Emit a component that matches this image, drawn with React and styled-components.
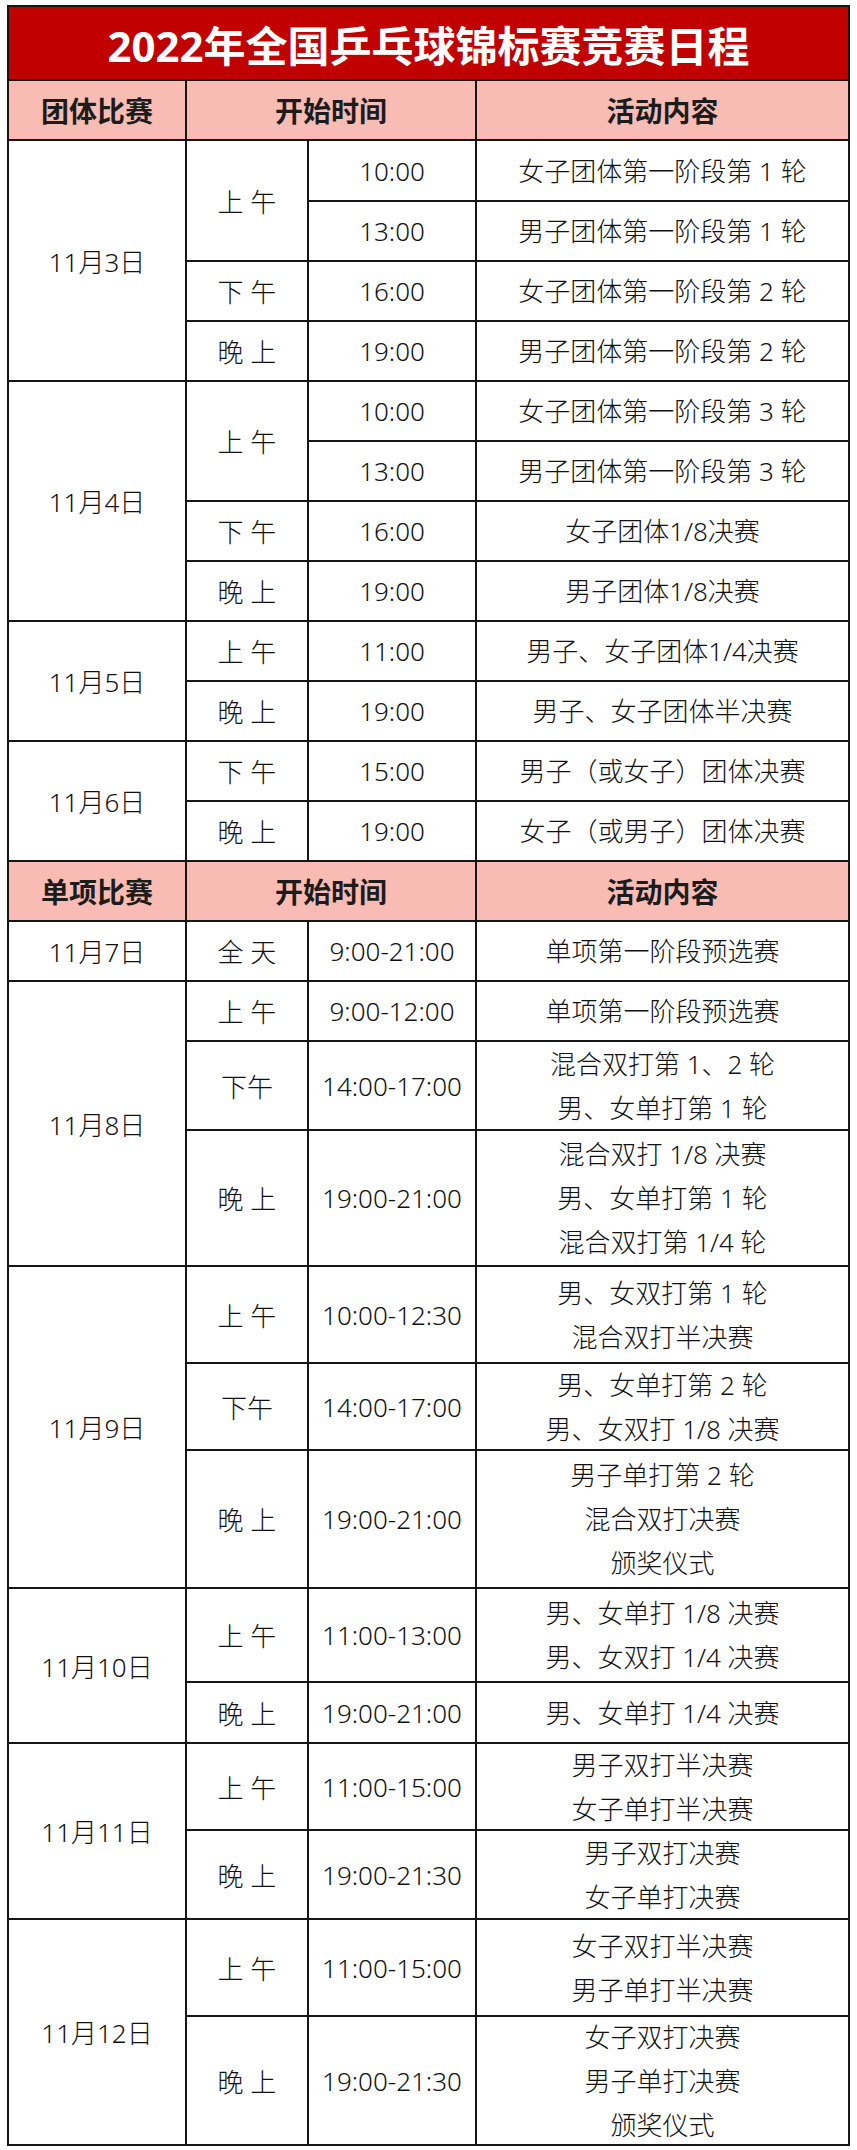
import styled, { createGlobalStyle } from "styled-components";

const GlobalStyle = createGlobalStyle`
  body {
    margin: 0;
    background: #ffffff;
    font-family: "Noto Sans", "Noto Sans CJK SC", sans-serif;
    color: #111111;
  }
`;

const LINE = "#161616";

const teamDays = [
  {
    date: "11月3日",
    periods: [
      {
        name: "上 午",
        slots: [
          { time: "10:00", items: ["女子团体第一阶段第 1 轮"], h: 59 },
          { time: "13:00", items: ["男子团体第一阶段第 1 轮"], h: 58 },
        ],
      },
      { name: "下 午", slots: [{ time: "16:00", items: ["女子团体第一阶段第 2 轮"], h: 58 }] },
      { name: "晚 上", slots: [{ time: "19:00", items: ["男子团体第一阶段第 2 轮"], h: 58 }] },
    ],
  },
  {
    date: "11月4日",
    periods: [
      {
        name: "上 午",
        slots: [
          { time: "10:00", items: ["女子团体第一阶段第 3 轮"], h: 58 },
          { time: "13:00", items: ["男子团体第一阶段第 3 轮"], h: 58 },
        ],
      },
      { name: "下 午", slots: [{ time: "16:00", items: ["女子团体1/8决赛"], h: 58 }] },
      { name: "晚 上", slots: [{ time: "19:00", items: ["男子团体1/8决赛"], h: 58 }] },
    ],
  },
  {
    date: "11月5日",
    periods: [
      { name: "上 午", slots: [{ time: "11:00", items: ["男子、女子团体1/4决赛"], h: 58 }] },
      { name: "晚 上", slots: [{ time: "19:00", items: ["男子、女子团体半决赛"], h: 58 }] },
    ],
  },
  {
    date: "11月6日",
    periods: [
      { name: "下 午", slots: [{ time: "15:00", items: ["男子（或女子）团体决赛"], h: 58 }] },
      { name: "晚 上", slots: [{ time: "19:00", items: ["女子（或男子）团体决赛"], h: 58 }] },
    ],
  },
];

const singleDays = [
  {
    date: "11月7日",
    periods: [{ name: "全 天", slots: [{ time: "9:00-21:00", items: ["单项第一阶段预选赛"], h: 58 }] }],
  },
  {
    date: "11月8日",
    periods: [
      { name: "上 午", slots: [{ time: "9:00-12:00", items: ["单项第一阶段预选赛"], h: 58 }] },
      {
        name: "下午",
        slots: [{ time: "14:00-17:00", items: ["混合双打第 1、2 轮", "男、女单打第 1 轮"], h: 87 }],
      },
      {
        name: "晚 上",
        slots: [
          {
            time: "19:00-21:00",
            items: ["混合双打 1/8 决赛", "男、女单打第 1 轮", "混合双打第 1/4 轮"],
            h: 134,
          },
        ],
      },
    ],
  },
  {
    date: "11月9日",
    periods: [
      {
        name: "上 午",
        slots: [{ time: "10:00-12:30", items: ["男、女双打第 1 轮", "混合双打半决赛"], h: 95 }],
      },
      {
        name: "下午",
        slots: [{ time: "14:00-17:00", items: ["男、女单打第 2 轮", "男、女双打 1/8 决赛"], h: 85 }],
      },
      {
        name: "晚 上",
        slots: [{ time: "19:00-21:00", items: ["男子单打第 2 轮", "混合双打决赛", "颁奖仪式"], h: 136 }],
      },
    ],
  },
  {
    date: "11月10日",
    periods: [
      {
        name: "上 午",
        slots: [{ time: "11:00-13:00", items: ["男、女单打 1/8 决赛", "男、女双打 1/4 决赛"], h: 92 }],
      },
      { name: "晚 上", slots: [{ time: "19:00-21:00", items: ["男、女单打 1/4 决赛"], h: 59 }] },
    ],
  },
  {
    date: "11月11日",
    periods: [
      {
        name: "上 午",
        slots: [{ time: "11:00-15:00", items: ["男子双打半决赛", "女子单打半决赛"], h: 85 }],
      },
      {
        name: "晚 上",
        slots: [{ time: "19:00-21:30", items: ["男子双打决赛", "女子单打决赛"], h: 87 }],
      },
    ],
  },
  {
    date: "11月12日",
    periods: [
      {
        name: "上 午",
        slots: [{ time: "11:00-15:00", items: ["女子双打半决赛", "男子单打半决赛"], h: 95 }],
      },
      {
        name: "晚 上",
        slots: [{ time: "19:00-21:30", items: ["女子双打决赛", "男子单打决赛", "颁奖仪式"], h: 127 }],
      },
    ],
  },
];

const DaySection = ({ day }) => (
  <DayRow>
    <DateCell>{day.date}</DateCell>
    <Stack>
      {day.periods.map((p, i) => (
        <PeriodRow key={i}>
          <PeriodCell>{p.name}</PeriodCell>
          <Stack>
            {p.slots.map((s, j) => (
              <SlotRow key={j}>
                <TimeCell $h={s.h}>{s.time}</TimeCell>
                <ContentCell $h={s.h}>
                  {s.items.map((t) => (
                    <Line key={t}>{t}</Line>
                  ))}
                </ContentCell>
              </SlotRow>
            ))}
          </Stack>
        </PeriodRow>
      ))}
    </Stack>
  </DayRow>
);

const Header = ({ first }) => (
  <HeaderRow>
    <HeadCell>{first}</HeadCell>
    <HeadCell>开始时间</HeadCell>
    <HeadCell>活动内容</HeadCell>
  </HeaderRow>
);

const App = () => {
  return (
    <>
      <GlobalStyle />
      <Page>
        <Table>
          <TitleBar>2022年全国乒乓球锦标赛竞赛日程</TitleBar>
          <Header first="团体比赛" />
          {teamDays.map((d) => (
            <DaySection key={d.date} day={d} />
          ))}
          <Header first="单项比赛" />
          {singleDays.map((d) => (
            <DaySection key={d.date} day={d} />
          ))}
        </Table>
      </Page>
    </>
  );
};

const Page = styled.div`
  padding: 5px 0 6px 7px;
`;

const Table = styled.div`
  width: 843px;
  box-sizing: border-box;
  padding: 2px;
  background: ${LINE};
  display: flex;
  flex-direction: column;
  gap: 2px;
`;

const TitleBar = styled.div`
  height: 72px;
  background: #c10000;
  color: #ffffff;
  font-size: 42px;
  font-weight: 700;
  display: flex;
  align-items: center;
  justify-content: center;
`;

const HeaderRow = styled.div`
  display: grid;
  grid-template-columns: 176px 288px 1fr;
  gap: 2px;
  height: 58px;
`;

const HeadCell = styled.div`
  background: #f9bcb4;
  color: #1c1c1c;
  font-size: 28px;
  font-weight: 700;
  display: flex;
  align-items: center;
  justify-content: center;
`;

const DayRow = styled.div`
  display: flex;
  gap: 2px;
`;

const Stack = styled.div`
  flex: 1;
  display: flex;
  flex-direction: column;
  gap: 2px;
`;

const PeriodRow = styled.div`
  display: flex;
  gap: 2px;
`;

const SlotRow = styled.div`
  display: flex;
  gap: 2px;
`;

const BaseCell = styled.div`
  background: #ffffff;
  font-size: 26px;
  font-weight: 300;
  display: flex;
  align-items: center;
  justify-content: center;
  white-space: nowrap;
`;

const DateCell = styled(BaseCell)`
  width: 176px;
  flex-shrink: 0;
`;

const PeriodCell = styled(BaseCell)`
  width: 120px;
  flex-shrink: 0;
`;

const TimeCell = styled(BaseCell)`
  width: 166px;
  flex-shrink: 0;
  height: ${(p) => p.$h}px;
`;

const ContentCell = styled(BaseCell)`
  flex: 1;
  height: ${(p) => p.$h}px;
  flex-direction: column;
`;

const Line = styled.div`
  line-height: 44px;
`;

export default App;
